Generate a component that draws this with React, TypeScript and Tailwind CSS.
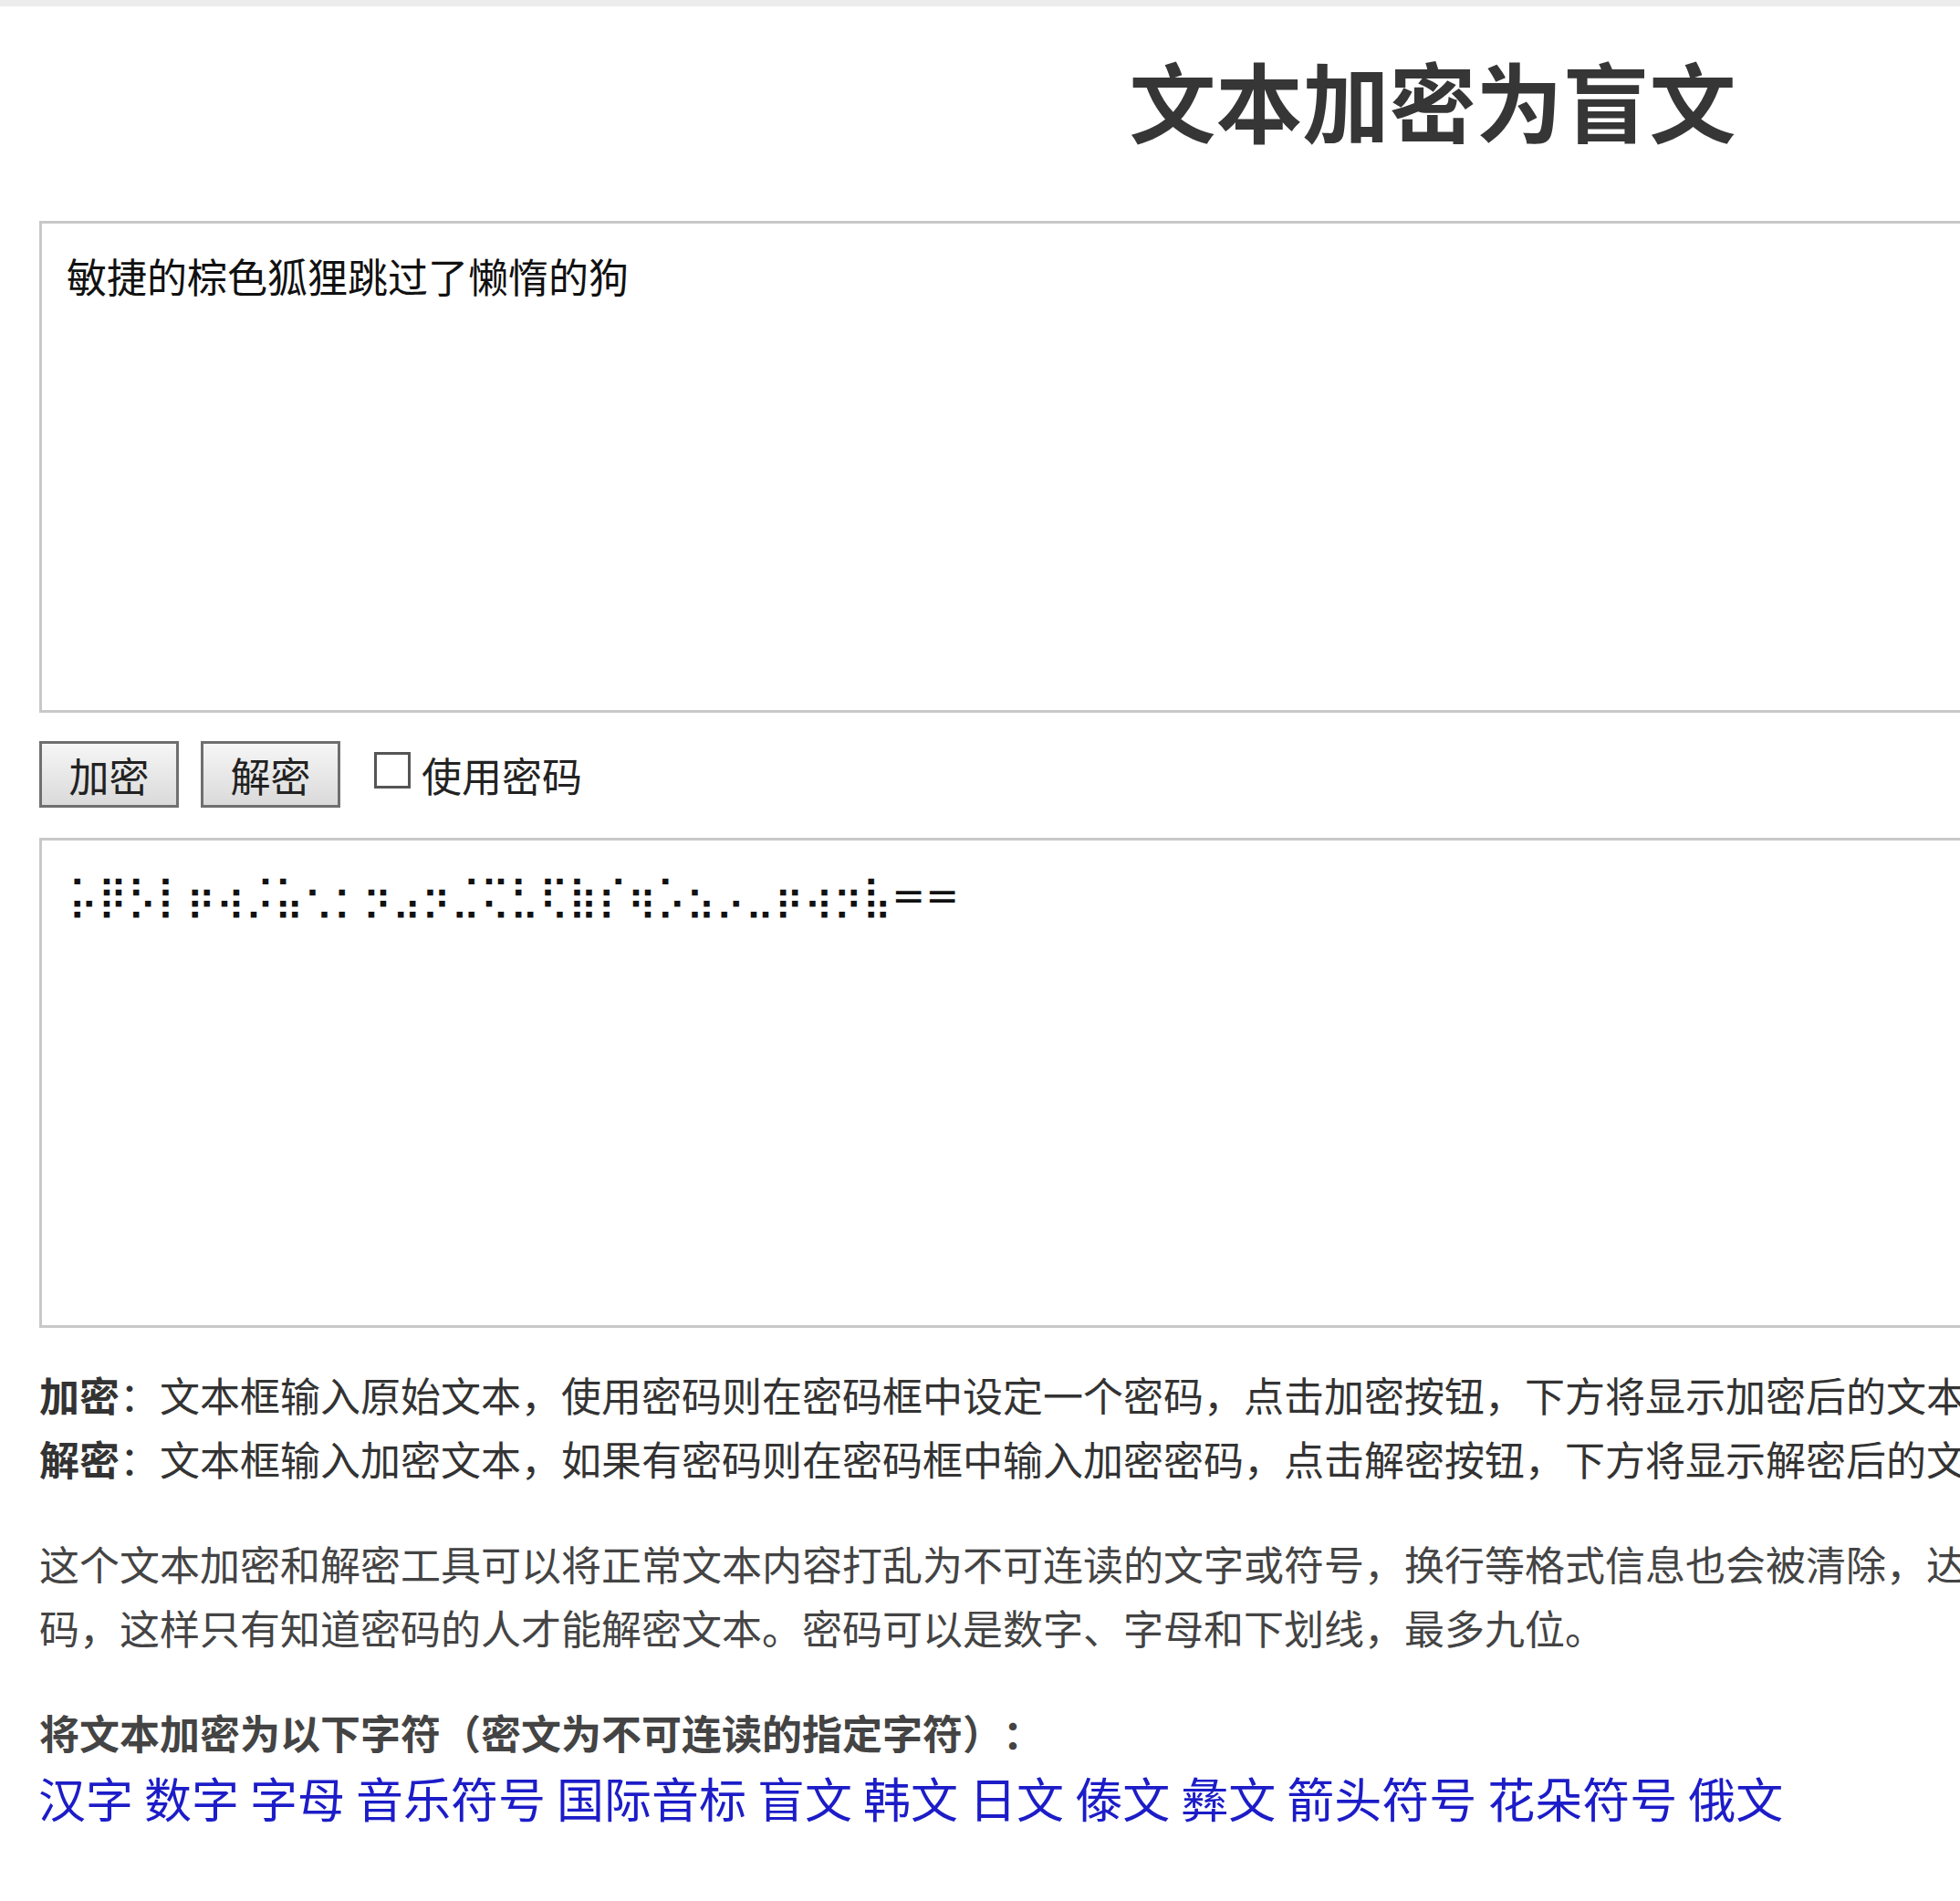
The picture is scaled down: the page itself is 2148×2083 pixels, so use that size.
import React from 'react';

const BRAILLE_CODES = [
  0x65, 0x7f, 0x63, 0x47, 0x76, 0xb4, 0x68, 0xe5, 0x82, 0x42, 0x72, 0xe0, 0x72, 0xc8,
  0x8d, 0xc3, 0x8f, 0xf7, 0x4e, 0xb6, 0x61, 0xe2, 0x60, 0xc0, 0x76, 0xb4, 0x72, 0xe7,
];
const braille = BRAILLE_CODES.map((c) => String.fromCharCode(0x2800 + c)).join('') + '==';

const links = [
  '汉字', '数字', '字母', '音乐符号', '国际音标', '盲文', '韩文',
  '日文', '傣文', '彝文', '箭头符号', '花朵符号', '俄文',
];

const App: React.FC = () => {
  return (
    <div className="w-full min-h-screen overflow-hidden bg-white font-['Noto_Sans_CJK_SC',sans-serif] text-[#333] [text-spacing-trim:space-all]">
      <div className="h-[7px] bg-[#ececec]" />
      <div className="w-[3140px] px-[43px]">
        <h1 className="mt-[54px] text-center text-[95px] leading-[95px] font-bold text-[#363636]">
          文本加密为盲文
        </h1>

        <textarea
          defaultValue="敏捷的棕色狐狸跳过了懒惰的狗"
          className="mt-[86px] block w-full h-[539px] border-[3px] border-[#c8c8c8] px-[27px] pt-[29px] pb-[20px] text-[44px] leading-[56px] text-[#111] resize-none outline-none [text-spacing-trim:space-all]"
        />

        <div className="mt-[31px] flex items-center h-[73px]">
          <button className="w-[153px] h-[73px] border-[3px] border-[#6f6f6f] bg-gradient-to-b from-[#f6f6f6] to-[#dadada] text-[44px] leading-none text-[#222]">
            加密
          </button>
          <button className="ml-[24px] w-[153px] h-[73px] border-[3px] border-[#6f6f6f] bg-gradient-to-b from-[#f6f6f6] to-[#dadada] text-[44px] leading-none text-[#222]">
            解密
          </button>
          <label className="ml-[37px] flex items-center text-[44px] leading-none text-[#222]">
            <input
              type="checkbox"
              className="appearance-none w-[40px] h-[40px] border-[3px] border-[#555] bg-white -mt-[10px]"
            />
            <span className="ml-[12px]">使用密码</span>
          </label>
        </div>

        <div className="mt-[33px] h-[537px] border-[3px] border-[#c8c8c8] pl-[29px] pt-[33px]">
          <div className="font-['DejaVu_Sans',sans-serif] text-[44px] leading-[56px] text-[#111] whitespace-nowrap">
            {braille}
          </div>
        </div>

        <div className="mt-[38px] text-[44px] leading-[70px] whitespace-nowrap">
          <p>
            <b className="text-[#333]">加密</b>：文本框输入原始文本，使用密码则在密码框中设定一个密码，点击加密按钮，下方将显示加密后的文本。
          </p>
          <p>
            <b className="text-[#333]">解密</b>：文本框输入加密文本，如果有密码则在密码框中输入加密密码，点击解密按钮，下方将显示解密后的文本。
          </p>
        </div>

        <p className="mt-[45px] text-[44px] leading-[70px] whitespace-nowrap text-[#444]">
          这个文本加密和解密工具可以将正常文本内容打乱为不可连读的文字或符号，换行等格式信息也会被清除，达到文本加密的目的。加密和解密时可以设置一个密
          <br />
          码，这样只有知道密码的人才能解密文本。密码可以是数字、字母和下划线，最多九位。
        </p>

        <p className="mt-[45px] text-[44px] leading-[70px] font-bold text-[#444] whitespace-nowrap">
          将文本加密为以下字符（密文为不可连读的指定字符）：
        </p>
        <div className="-ml-[1px] flex gap-[12px] text-[52px] leading-[73px] text-[#1c1cc8] whitespace-nowrap">
          {links.map((l) => (
            <a key={l} href="#" className="no-underline">
              {l}
            </a>
          ))}
        </div>
      </div>
    </div>
  );
};

export default App;
